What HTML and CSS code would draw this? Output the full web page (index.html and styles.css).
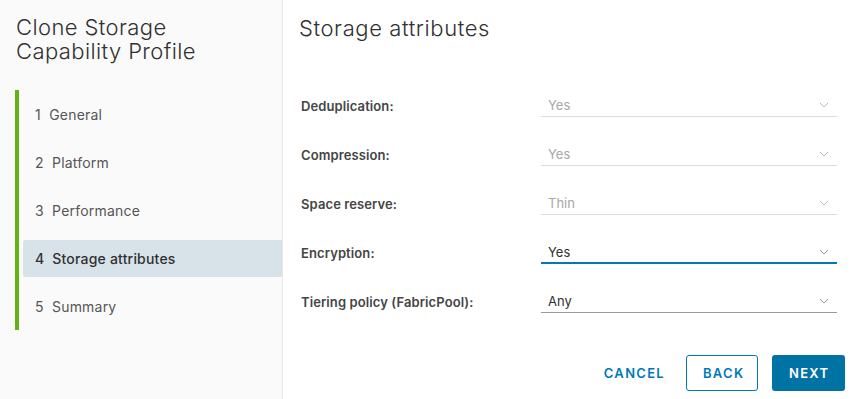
FILE: index.html
```html
<!DOCTYPE html>
<html lang="en">
<head>
    <meta charset="UTF-8">
    <title>Clone Storage Capability Profile</title>
    <link rel="stylesheet" href="styles.css">
</head>
<body>
    <div class="wizard">
        <div class="side">
            <h1 class="side-title">Clone Storage Capability Profile</h1>
            <ul class="steps">
                <li class="step"><span class="step-in">1&nbsp; General</span></li>
                <li class="step"><span class="step-in">2&nbsp; Platform</span></li>
                <li class="step"><span class="step-in">3&nbsp; Performance</span></li>
                <li class="step active"><span class="step-in">4&nbsp; Storage attributes</span></li>
                <li class="step"><span class="step-in">5&nbsp; Summary</span></li>
            </ul>
        </div>
        <div class="main">
            <h2 class="main-title">Storage attributes</h2>
            <div class="form">
                <div class="row">
                    <label class="lbl">Deduplication:</label>
                    <div class="sel disabled"><span>Yes</span><svg class="chev" width="10" height="6" viewBox="0 0 10 6"><path d="M1 1 L5 5 L9 1" fill="none" stroke="currentColor" stroke-width="1"/></svg></div>
                </div>
                <div class="row">
                    <label class="lbl">Compression:</label>
                    <div class="sel disabled"><span>Yes</span><svg class="chev" width="10" height="6" viewBox="0 0 10 6"><path d="M1 1 L5 5 L9 1" fill="none" stroke="currentColor" stroke-width="1"/></svg></div>
                </div>
                <div class="row">
                    <label class="lbl">Space reserve:</label>
                    <div class="sel disabled"><span>Thin</span><svg class="chev" width="10" height="6" viewBox="0 0 10 6"><path d="M1 1 L5 5 L9 1" fill="none" stroke="currentColor" stroke-width="1"/></svg></div>
                </div>
                <div class="row">
                    <label class="lbl">Encryption:</label>
                    <div class="sel focus"><span>Yes</span><svg class="chev" width="10" height="6" viewBox="0 0 10 6"><path d="M1 1 L5 5 L9 1" fill="none" stroke="currentColor" stroke-width="1"/></svg></div>
                </div>
                <div class="row">
                    <label class="lbl">Tiering policy (FabricPool):</label>
                    <div class="sel"><span>Any</span><svg class="chev" width="10" height="6" viewBox="0 0 10 6"><path d="M1 1 L5 5 L9 1" fill="none" stroke="currentColor" stroke-width="1"/></svg></div>
                </div>
            </div>
            <div class="actions">
                <button class="btn btn-link">CANCEL</button>
                <button class="btn btn-outline">BACK</button>
                <button class="btn btn-primary">NEXT</button>
            </div>
        </div>
    </div>
</body>
</html>
```
FILE: styles.css
```css
body{
    margin: 0;
    font-family: Inter, "Noto Sans", sans-serif;
    color: #313131;
    background: #fff;
}
.wizard{
    display: flex;
    height: 399px;
}
.side{
    width: 283px;
    background: #fafafa;
    border-right: 1px solid #e8e8e8;
    padding-top: 15px;
    box-sizing: border-box;
    flex-shrink: 0;
}
.side-title{
    margin: 0 0 0 16px;
    font-size: 22px;
    font-weight: 300;
    line-height: 24px;
    letter-spacing: 0.4px;
    color: #313131;
    width: 220px;
}
.steps{
    list-style: none;
    margin: 27px 0 0 15px;
    padding: 0;
    border-left: 4px solid #60b515;
}
.step{
    height: 48px;
    display: flex;
    align-items: center;
}
.step-in{
    flex: 1;
    height: 37px;
    margin-left: 4px;
    padding-left: 12px;
    display: flex;
    align-items: center;
    font-size: 14px;
    letter-spacing: 0.2px;
    color: #565656;
    border-radius: 3px 0 0 3px;
}
.step.active .step-in{
    background: #d8e3e9;
    color: #313131;
    font-weight: 500;
}
.main{
    flex: 1;
    padding: 14px 13px 0 16px;
    display: flex;
    flex-direction: column;
}
.main-title{
    margin: 0;
    font-size: 22px;
    font-weight: 300;
    line-height: 28px;
    letter-spacing: 0.6px;
    color: #313131;
}
.form{
    margin: 39px 0 0 2px;
}
.row{
    display: flex;
    align-items: center;
    height: 49px;
}
.lbl{
    width: 240px;
    font-size: 13px;
    font-weight: 600;
    letter-spacing: 0.1px;
    color: #454545;
}
.sel{
    width: 296px;
    height: 23px;
    box-sizing: border-box;
    border-bottom: 1px solid #9a9a9a;
    display: flex;
    align-items: center;
    justify-content: space-between;
    padding: 0 8px 0 7px;
    font-size: 13px;
    color: #313131;
}
.sel .chev{
    color: #9a9a9a;
}
.sel.disabled{
    color: #a8a8a8;
    border-bottom-color: #dcdcdc;
}
.sel.disabled .chev{
    color: #bbb;
}
.sel.focus{
    border-bottom: 2px solid #0079b8;
}
.actions{
    margin-top: 29px;
    display: flex;
    justify-content: flex-end;
    gap: 14px;
}
.btn{
    height: 36px;
    padding: 0 16px;
    font-family: inherit;
    font-size: 13px;
    font-weight: 600;
    letter-spacing: 0.1em;
    border-radius: 3px;
    border: 1px solid transparent;
    background: none;
    cursor: pointer;
}
.btn-link{
    color: #0079b8;
    margin-right: -10px;
}
.btn-outline{
    color: #0079b8;
    border-color: #0079b8;
    width: 72px;
}
.btn-primary{
    color: #fff;
    background: #0072a3;
    width: 73px;
}
```
